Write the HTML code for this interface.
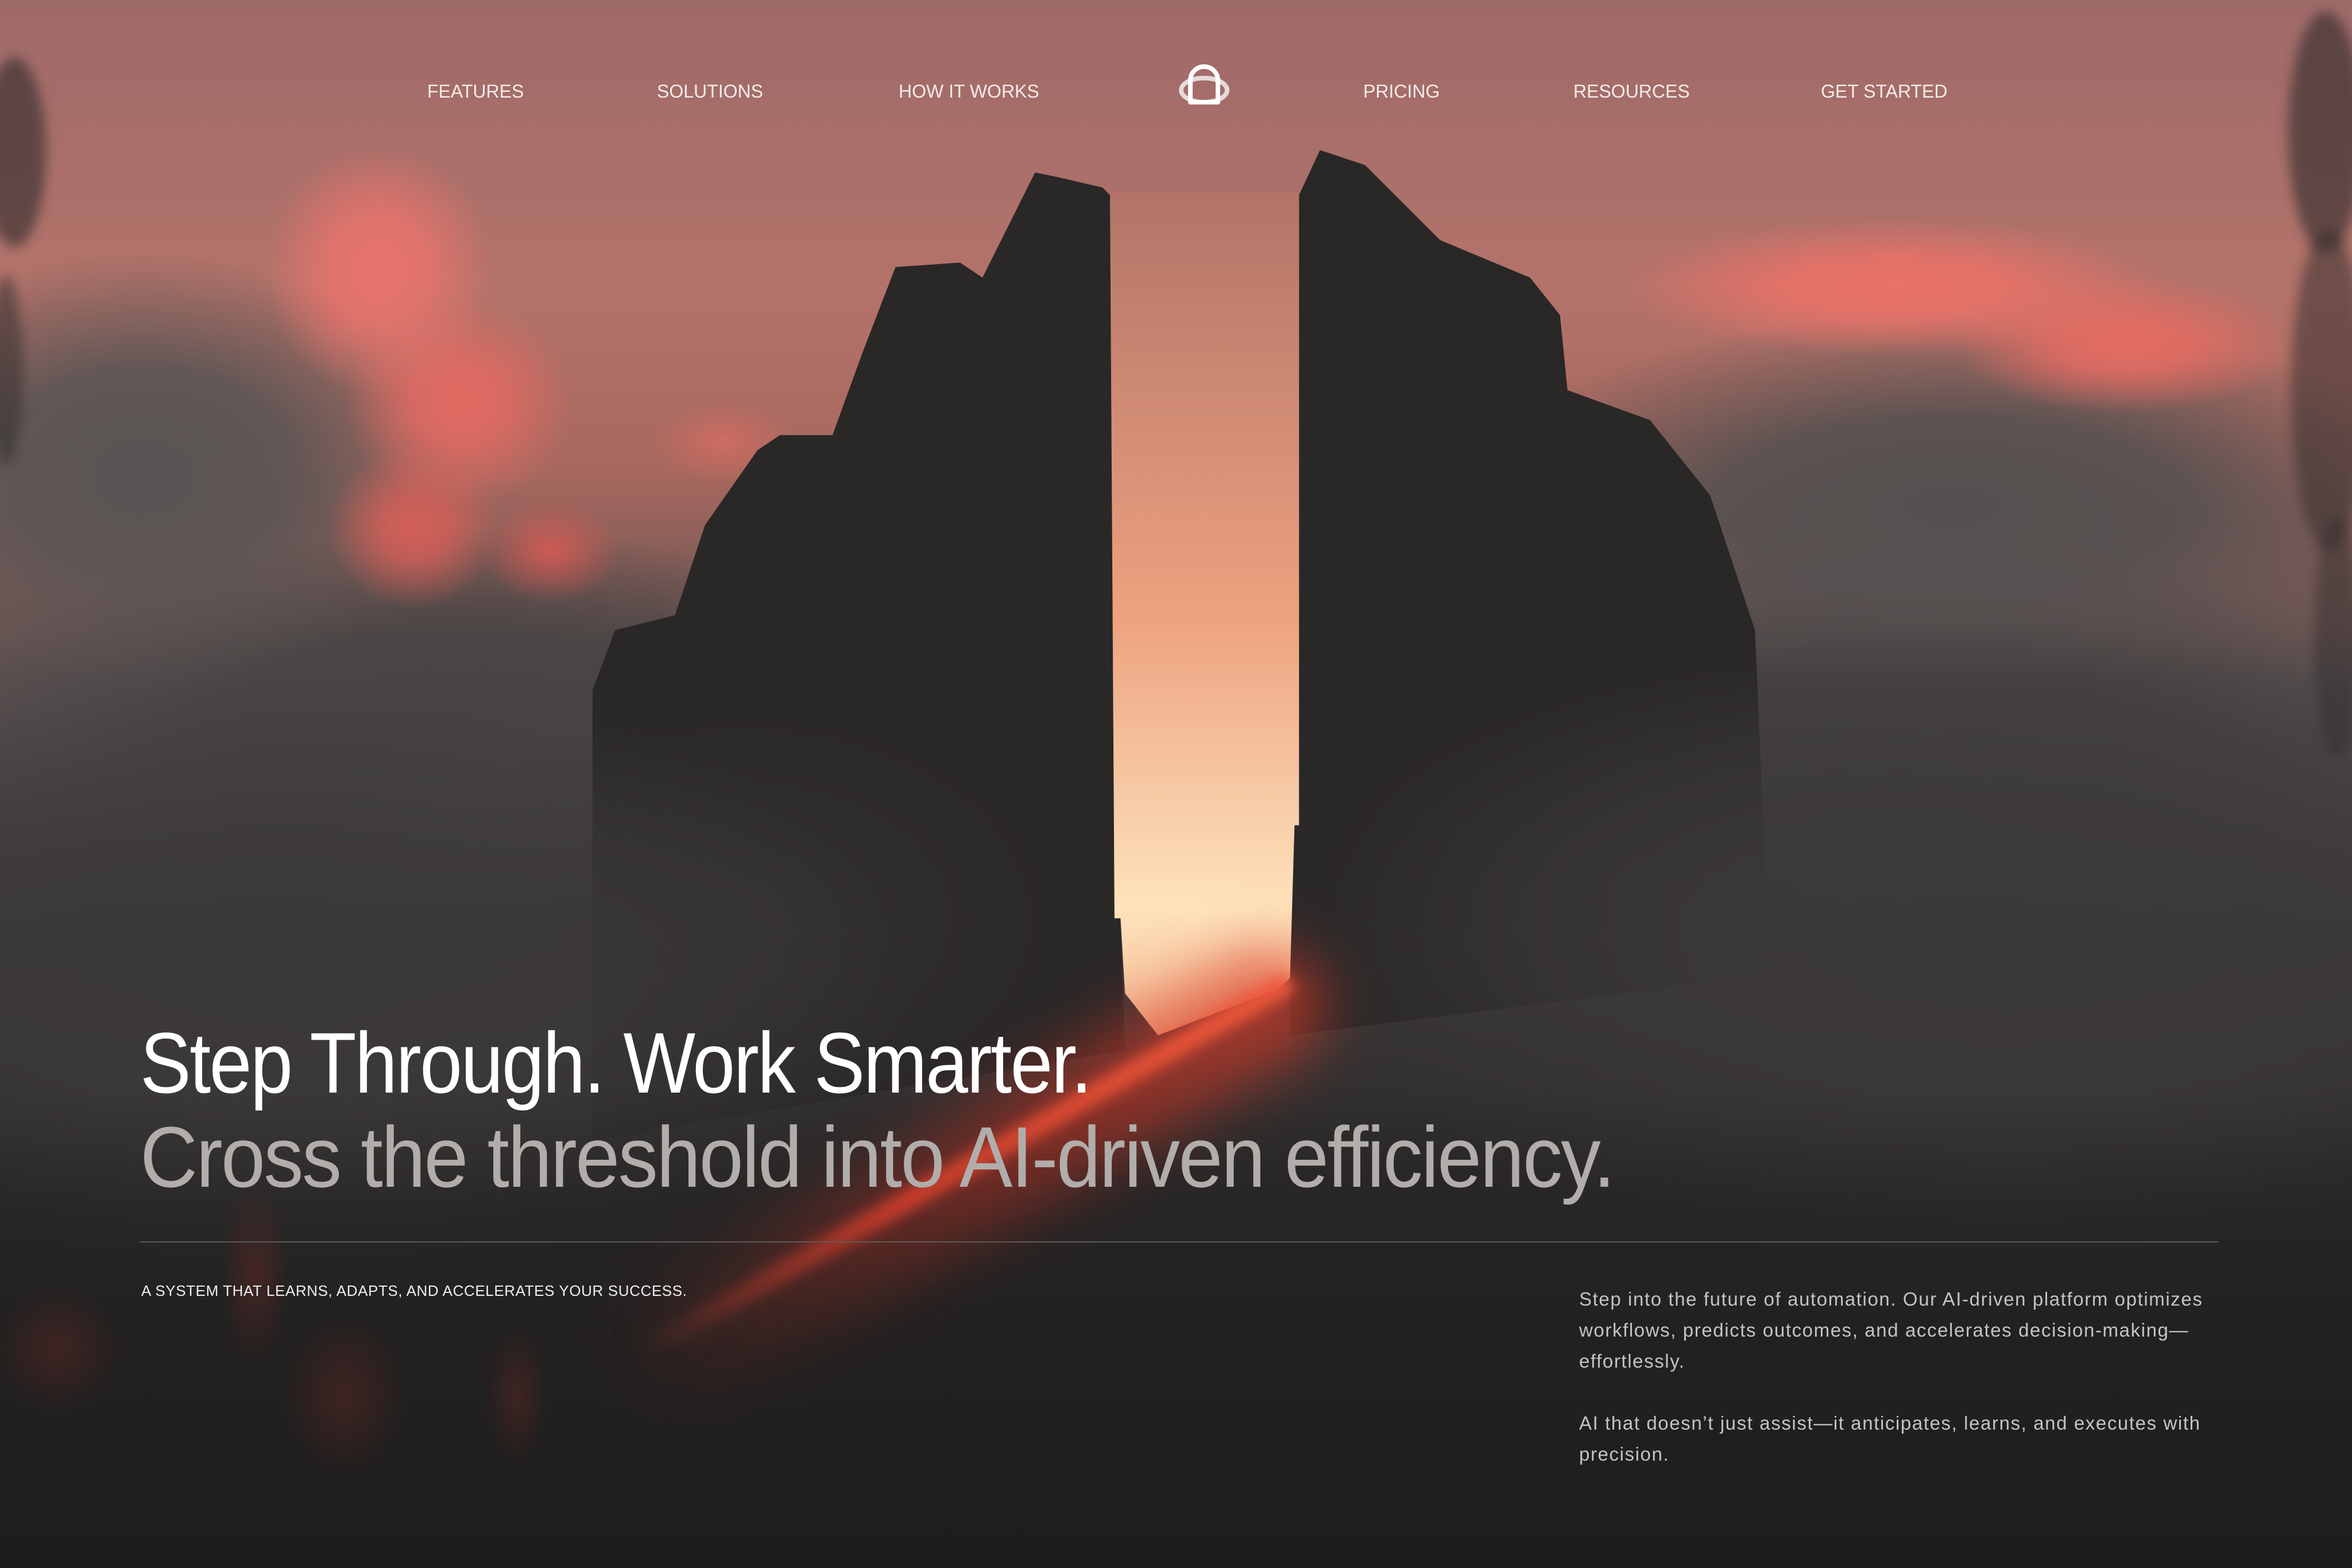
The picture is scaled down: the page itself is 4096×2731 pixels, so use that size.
<!DOCTYPE html>
<html><head><meta charset="utf-8"><style>
html,body{margin:0;padding:0;width:4096px;height:2731px;overflow:hidden;background:#1d1d1d}
body{position:relative;background:linear-gradient(180deg,#9e6a69 0px,#b3736a 500px,#a8685e 820px,#5a5050 1180px,#3e3a3a 1600px,#2a2828 2100px,#1c1b1b 2731px)}
.a{position:absolute}
.t{position:absolute;font-family:"Liberation Sans",sans-serif;white-space:nowrap}
.nav{top:141px;font-size:32px;color:#f4ecea}
.h{font-size:150px;left:244px;line-height:1;transform-origin:left top;letter-spacing:-0.02em}
.p{left:2750px;font-size:33px;color:#c4c4c4;line-height:54px;letter-spacing:1.6px}
</style></head><body>
<div class="a" style="left:0;top:0;width:4096px;height:2731px;background:
radial-gradient(560px 380px at 250px 820px,rgba(88,84,84,1) 0,rgba(88,84,84,.9) 45%,rgba(88,84,84,0) 100%),
radial-gradient(900px 330px at 3400px 880px,rgba(84,80,80,1) 0,rgba(84,80,80,.9) 45%,rgba(84,80,80,0) 100%),
radial-gradient(900px 330px at 800px 1250px,rgba(72,68,68,1) 0,rgba(72,68,68,.9) 45%,rgba(72,68,68,0) 100%),
radial-gradient(900px 380px at 3300px 1300px,rgba(70,66,66,1) 0,rgba(70,66,66,.9) 45%,rgba(70,66,66,0) 100%)"></div>
<div class="a" style="left:0;top:0;width:4096px;height:2731px;background:
radial-gradient(200px 220px at 660px 470px,rgba(232,116,108,1) 0,rgba(232,116,108,.85) 40%,rgba(232,116,108,0) 100%),
radial-gradient(200px 180px at 800px 700px,rgba(226,106,98,1) 0,rgba(226,106,98,.8) 40%,rgba(226,106,98,0) 100%),
radial-gradient(150px 140px at 720px 920px,rgba(220,96,88,.9) 0,rgba(220,96,88,.7) 40%,rgba(220,96,88,0) 100%),
radial-gradient(120px 90px at 960px 960px,rgba(215,90,84,.9) 0,rgba(215,90,84,0) 100%),
radial-gradient(120px 70px at 1260px 770px,rgba(216,108,98,.8) 0,rgba(216,108,98,0) 100%),
radial-gradient(480px 120px at 3300px 500px,rgba(234,114,104,1) 0,rgba(234,114,104,.85) 40%,rgba(234,114,104,0) 100%),
radial-gradient(300px 120px at 3700px 600px,rgba(230,108,98,1) 0,rgba(230,108,98,.8) 40%,rgba(230,108,98,0) 100%)"></div>
<svg class="a" style="left:0;top:0" width="4096" height="2731" viewBox="0 0 1568 1045" preserveAspectRatio="none">
<polygon fill="#2a2727" points="395,460 410,420 450,410 470,350 505,300 520,290 555,290 575,235 597,178 640,175 655,185 690,115 705,118 735,125 740,130 743,612 747,612 750,700 395,760"/>
<polygon fill="#2a2727" points="866,130 880,100 910,110 960,160 1020,185 1040,210 1045,260 1100,280 1140,330 1170,420 1180,650 860,690 860,652 863,550 866,550"/>
</svg>
<div class="a" style="left:0;top:0;width:4096px;height:2731px;background:
linear-gradient(180deg,rgba(34,32,32,0) 1900px,rgba(34,32,32,.9) 2350px,#1e1d1d 2731px),
radial-gradient(1100px 520px at 500px 1700px,rgba(60,57,57,1) 0,rgba(60,57,57,.85) 45%,rgba(60,57,57,0) 100%),
radial-gradient(1200px 560px at 3500px 1650px,rgba(60,57,57,1) 0,rgba(60,57,57,.85) 45%,rgba(60,57,57,0) 100%),
radial-gradient(600px 400px at 1300px 1600px,rgba(55,52,52,.7) 0,rgba(55,52,52,0) 100%),
radial-gradient(700px 400px at 2900px 1550px,rgba(55,52,52,.6) 0,rgba(55,52,52,0) 100%)"></div>
<svg class="a" style="left:0;top:0" width="4096" height="2731" viewBox="0 0 1568 1045" preserveAspectRatio="none">
<defs><linearGradient id="gap" x1="0" y1="0" x2="0" y2="1">
<stop offset="0" stop-color="#b27468"/><stop offset="0.5" stop-color="#eda17f"/><stop offset="0.85" stop-color="#fde3bc"/><stop offset="1" stop-color="#f4b890"/>
</linearGradient></defs>
<polygon fill="url(#gap)" points="740,128 866,128 866,550 863,550 860,652 850,660 772,690 750,662 747,612 743,612"/>
</svg>
<div class="a" style="left:985px;top:1951px;width:1400px;height:200px;transform:rotate(-29.7deg);transform-origin:center;background:linear-gradient(90deg,rgba(200,48,32,0),rgba(200,48,32,.5) 60%,rgba(220,60,40,.7));border-radius:100px;filter:blur(50px)"></div>
<div class="a" style="left:1035px;top:2013px;width:1300px;height:36px;transform:rotate(-29.7deg);transform-origin:center;background:linear-gradient(90deg,rgba(226,64,44,0),rgba(226,64,44,.8) 40%,#ee5a3c);border-radius:20px;filter:blur(12px)"></div>
<div class="a" style="left:0;top:2000px;width:1100px;height:700px;background:
radial-gradient(60px 160px at 444px 220px,rgba(106,42,36,.45),rgba(106,42,36,0)),
radial-gradient(110px 110px at 100px 350px,rgba(106,42,36,.4),rgba(106,42,36,0)),
radial-gradient(110px 140px at 600px 430px,rgba(106,42,36,.4),rgba(106,42,36,0)),
radial-gradient(55px 120px at 900px 430px,rgba(106,42,36,.4),rgba(106,42,36,0))"></div>
<div class="a" style="left:-30px;top:100px;width:110px;height:330px;border-radius:50%;background:#2e2b2b;opacity:.6;filter:blur(10px)"></div>
<div class="a" style="left:-20px;top:480px;width:60px;height:330px;border-radius:50%;background:#2e2b2b;opacity:.5;filter:blur(10px)"></div>
<div class="a" style="left:3985px;top:20px;width:130px;height:420px;border-radius:50%;background:#2e2b2b;opacity:.6;filter:blur(10px)"></div>
<div class="a" style="left:3990px;top:400px;width:130px;height:560px;border-radius:50%;background:#2e2b2b;opacity:.5;filter:blur(10px)"></div>
<div class="a" style="left:4030px;top:900px;width:80px;height:420px;border-radius:50%;background:#2e2b2b;opacity:.45;filter:blur(10px)"></div>

<div class="t nav" style="left:744px">FEATURES</div>
<div class="t nav" style="left:1144px">SOLUTIONS</div>
<div class="t nav" style="left:1565px">HOW IT WORKS</div>
<svg class="a" style="left:2047px;top:110px" width="100" height="90" viewBox="0 0 100 90">
<ellipse cx="50" cy="47" rx="40" ry="21" fill="none" stroke="#ece6e6" stroke-width="8" opacity="0.9"/>
<path d="M26 68 V30 A24 24 0 0 1 74 30 V68 Z" fill="none" stroke="#ffffff" stroke-width="8" stroke-linejoin="round"/>
</svg>
<div class="t nav" style="left:2374px">PRICING</div>
<div class="t nav" style="left:2740px">RESOURCES</div>
<div class="t nav" style="left:3171px">GET STARTED</div>

<div class="t h" style="top:1776px;color:#fff;transform:scaleX(0.888)">Step Through. Work Smarter.</div>
<div class="t h" style="top:1940px;color:#b0adab;transform:scaleX(0.925)">Cross the threshold into AI-driven efficiency.</div>
<div class="a" style="left:243px;top:2162px;width:3620px;height:2px;background:#5e5a59"></div>
<div class="t" style="left:246px;top:2233px;font-size:26px;color:#eee;letter-spacing:0.6px">A SYSTEM THAT LEARNS, ADAPTS, AND ACCELERATES YOUR SUCCESS.</div>
<div class="t p" style="top:2236px">Step into the future of automation. Our AI-driven platform optimizes<br>workflows, predicts outcomes, and accelerates decision-making—<br>effortlessly.</div>
<div class="t p" style="top:2452px">AI that doesn’t just assist—it anticipates, learns, and executes with<br>precision.</div>
</body></html>
